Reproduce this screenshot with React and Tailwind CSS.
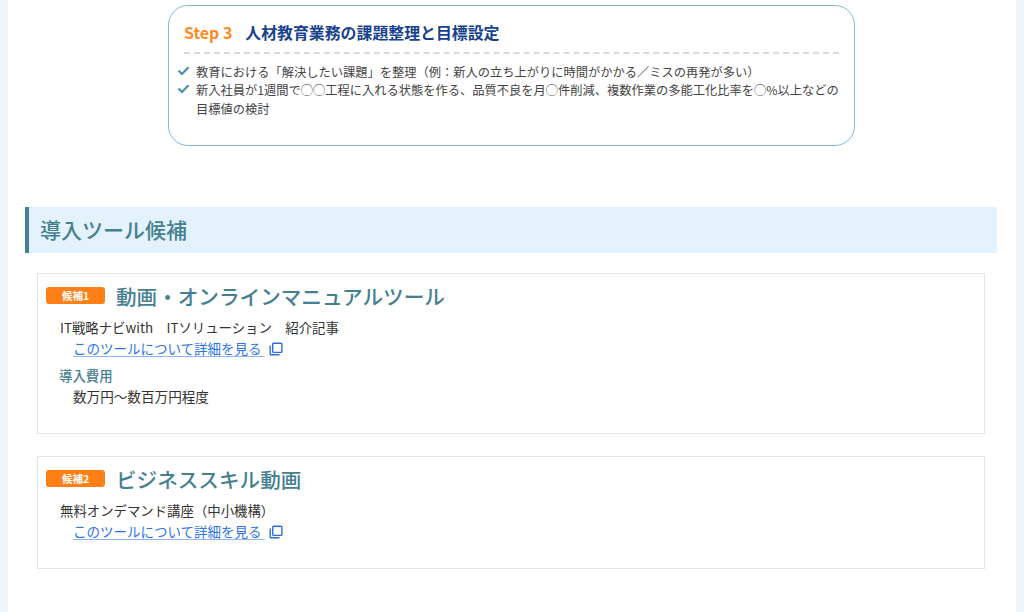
import React from 'react';

const font = { fontFamily: '"Noto Sans CJK JP", "Noto Sans", sans-serif' };

const CheckIcon = () => (
  <svg width="13" height="13" viewBox="0 0 13 13" className="shrink-0 mt-[1px]">
    <path d="M1.5 6.5 L5 10 L11.5 3.2" fill="none" stroke="#4a90b0" strokeWidth="2.2" />
  </svg>
);

const CopyIcon = () => (
  <svg width="14" height="14" viewBox="0 0 14 14" className="inline-block ml-[4px] align-[-2px]" fill="none" stroke="#2a6fd6" strokeWidth="1.4">
    <path d="M1.2 3.5 V12 a0.8 0.8 0 0 0 0.8 0.8 H10.5" />
    <rect x="3.7" y="1.2" width="9.2" height="9.2" rx="1" />
  </svg>
);

const ToolLink = () => (
  <div className="pl-[27px] h-[21px] leading-[21px] text-[13.5px]">
    <a className="text-[#2f74e6] underline decoration-[#8db6f2] underline-offset-2">このツールについて詳細を見る&nbsp;</a>
    <CopyIcon />
  </div>
);

const ToolCard = ({ badge, title, height, children }) => (
  <div className={`border border-[#e4e4e4] ${height} pt-[6px] px-[8px]`}>
    <div className="flex items-center h-[30px]">
      <span className="w-[59px] h-[17px] rounded-[3px] bg-[#ff7f17] text-white text-[10.5px] font-bold leading-[17px] text-center">{badge}</span>
      <h3 className="ml-[11px] mt-[1px] text-[20.6px] font-medium text-[#467f90] leading-[30px]">{title}</h3>
    </div>
    {children}
  </div>
);

export default function App() {
  return (
    <div style={font} className="w-[1024px] h-[612px] overflow-hidden bg-[#f0f5fa] px-[8px]">
      <div className="h-full bg-white pt-[5px] pl-[17px] pr-[19px] text-[#333333]">
        {/* Step box */}
        <div className="ml-[143px] w-[687px] h-[141px] border border-[#84b9d6] rounded-[20px] pt-[16px] pl-[8px] pr-[15px]">
          <div className="flex items-center h-[22px] pl-[7px] text-[15.9px] font-bold leading-[22px]">
            <span className="text-[#ff8a24]">Step 3</span>
            <span className="ml-[13px] text-[#17428c]">人材教育業務の課題整理と目標設定</span>
          </div>
          <div className="ml-[7px] mt-[8px] border-t-2 border-dashed border-[#d9d9d9]" />
          <ul className="mt-[9px] text-[12.25px] leading-[18.4px] text-[#444444]">
            <li className="flex gap-[6px]">
              <CheckIcon />
              <span>教育における「解決したい課題」を整理（例：新人の立ち上がりに時間がかかる／ミスの再発が多い）</span>
            </li>
            <li className="flex gap-[6px]">
              <CheckIcon />
              <span>新入社員が1週間で◯◯工程に入れる状態を作る、品質不良を月◯件削減、複数作業の多能工化比率を◯%以上などの目標値の検討</span>
            </li>
          </ul>
        </div>

        {/* Section heading */}
        <h2 className="mt-[61px] h-[46px] border-l-[4px] border-[#467f90] bg-[#e3f2fc] pl-[11px] text-[21px] font-medium leading-[44px] text-[#467f90]">導入ツール候補</h2>

        <div className="mt-[20px] mx-[12px] flex flex-col gap-[22px]">
          <ToolCard badge="候補1" title="動画・オンラインマニュアルツール" height="h-[161px]">
            <div className="mt-[7px] pl-[14px] h-[21px] leading-[21px] text-[13.4px]">IT戦略ナビwith　ITソリューション　紹介記事</div>
            <ToolLink />
            <div className="mt-[7px] pl-[13px] h-[19px] leading-[19px] text-[13.4px] font-medium text-[#467f90]">導入費用</div>
            <div className="mt-[1px] pl-[27px] h-[21px] leading-[21px] text-[13.6px]">数万円〜数百万円程度</div>
          </ToolCard>
          <ToolCard badge="候補2" title="ビジネススキル動画" height="h-[113px]">
            <div className="mt-[7px] pl-[14px] h-[21px] leading-[21px] text-[13.4px]">無料オンデマンド講座（中小機構）</div>
            <ToolLink />
          </ToolCard>
        </div>
      </div>
    </div>
  );
}
